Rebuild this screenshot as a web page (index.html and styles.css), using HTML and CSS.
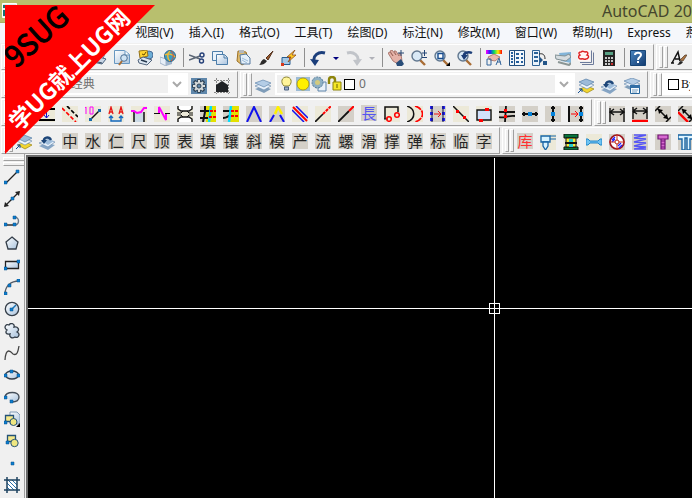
FILE: index.html
```html
<!DOCTYPE html>
<html lang="zh-CN">
<head>
<meta charset="utf-8">
<title>AutoCAD</title>
<link rel="stylesheet" href="styles.css">
</head>
<body>
<svg class="defs" aria-hidden="true">
  <defs>
    <linearGradient id="ice" x1="0" y1="0" x2="1" y2="1"><stop offset="0" stop-color="#fff"/><stop offset="1" stop-color="#a9c3de"/></linearGradient>
    <linearGradient id="navy" x1="0" y1="0" x2="1" y2="1"><stop offset="0" stop-color="#4a86c0"/><stop offset="1" stop-color="#123a70"/></linearGradient>
    <linearGradient id="rainbow"><stop offset="0" stop-color="#f0f"/><stop offset=".25" stop-color="#22f"/><stop offset=".5" stop-color="#0d6"/><stop offset=".75" stop-color="#fe0"/><stop offset="1" stop-color="#f00"/></linearGradient>
    <symbol id="layers" viewBox="0 0 16 16"><path d="M0 11l8-3 8 3-7 4z" fill="#7f9db9"/><path d="M0 8l8-3 8 3-7 4z" fill="#e8f1fa" stroke="#7292b3" stroke-width=".7"/><path d="M0 5l8-3 8 3-7 4z" fill="#b4cde6" stroke="#6488ae" stroke-width=".7"/></symbol>
    <symbol id="layers-current" viewBox="0 0 16 16"><path d="M2 11l7-3 7 3-7 4z" fill="#f2d530" stroke="#9a8413" stroke-width=".7"/><path d="M1 7l7-3 8 3-7 4z" fill="#eef5fc" stroke="#7292b3" stroke-width=".7"/><path d="M1 4l7-3 8 3-7 4z" fill="#9dbbd9" stroke="#587fa8" stroke-width=".7"/><path d="M0 15l4-4M1 11h3v3" fill="none" stroke="#124f94"/></symbol>
    <symbol id="layers-back" viewBox="0 0 16 16"><path d="M0 12l8-3 8 2-7 5z" fill="#86a5c5"/><path d="M0 9l8-3 8 2-7 5z" fill="#e6f0fa" stroke="#6d8eb1" stroke-width=".7"/><path d="M3 7l6-2 6 2-6 4z" fill="#9fbddb"/><path d="M5 8c-1-5 5-6 7-2" fill="none" stroke="#1d4679" stroke-width="2.4"/><path d="M2 6h6l-3 4z" fill="#1d4679"/></symbol>
    <symbol id="lens" viewBox="0 0 16 16"><path d="M9 10l5 5" stroke="#a96d35" stroke-width="2.4"/><circle cx="6" cy="6" r="5" fill="#d9e9f6" stroke="#62788f" stroke-width="1.4"/></symbol>
    <symbol id="printer" viewBox="0 0 16 16"><path d="M4 7l2-6 8 2-2 6z" fill="#fff" stroke="#6b8bb0"/><path d="M1 9l4-3 10 3-4 5-9-2z" fill="#c7d5e5" stroke="#48627f"/><path d="M3 11l8 2" stroke="#33475f"/></symbol>
  </defs>
</svg>

<header class="titlebar">
  <svg class="app-icon" viewBox="0 0 16 16"><path d="M.5 .5h14v14H.5z" fill="#dff0ec" stroke="#fff"/><path d="M1 2h4v3H1zm6 0h5v2H7zM1 7h3v6H1z" fill="#176f70"/></svg>
  <span class="title">AutoCAD 20</span>
</header>

<nav class="menubar">
  <a href="#">文件(F)</a><a href="#">编辑(E)</a><a href="#">视图(V)</a><a href="#">插入(I)</a><a href="#">格式(O)</a><a href="#">工具(T)</a><a href="#">绘图(D)</a><a href="#">标注(N)</a><a href="#">修改(M)</a><a href="#">窗口(W)</a><a href="#">帮助(H)</a><a href="#">Express</a><a href="#">燕</a>
</nav>

<div class="row">
  <div class="toolbar">
    <span class="grip"></span>
    <button aria-label="新建"><svg viewBox="0 0 16 16"><path d="M3 1h7l3 3v11H3z" fill="#fff" stroke="#567"/></svg></button>
    <button aria-label="打开"><svg viewBox="0 0 16 16"><path d="M1 4h6l1 2h7v8H1z" fill="#f2cf66" stroke="#976f1d"/></svg></button>
    <button aria-label="保存"><svg viewBox="0 0 16 16"><path d="M1 1h14v14H1z" fill="#4973a8"/><path d="M4 2h8v5H4z" fill="#fff"/></svg></button>
    <span class="sep"></span>
    <button aria-label="打印"><svg><use href="#printer"/></svg></button>
    <button aria-label="打印预览"><svg viewBox="0 0 16 16"><path d="M.5 .5h10l5 4v9H.5z" fill="url(#ice)" stroke="#6797c1"/><path d="M11 1v4h4" fill="#fff" stroke="#6797c1"/><path d="M8 11l-3 4" stroke="#a96d35" stroke-width="2"/><circle cx="10" cy="8" r="3.3" fill="#cfe3f3" stroke="#4e7195"/></svg></button>
    <button aria-label="发布"><svg viewBox="0 0 16 16"><circle cx="12" cy="5" r="4" fill="#6cadd5" stroke="#496c97"/><path d="M2 1l8-1 1 6-8 2z" fill="#ffd42f" stroke="#93711b"/><path d="M5 4l2 1 2-3" fill="none" stroke="#6b4b00"/><path d="M1 10l5-3 9 3-5 5-8-2z" fill="#dce6f1" stroke="#52647c"/><path d="M4 10l6 2" stroke="#26384e" stroke-width="1.5"/></svg></button>
    <button aria-label="三维 DWF"><svg viewBox="0 0 16 16"><path d="M0 7l6 2v7l-6-3z" fill="#e6eef7" stroke="#a5b5c9"/><path d="M6 9l6-1v6l-6 2z" fill="#9eb4cc"/><circle cx="10" cy="6" r="5.5" fill="#3e9ebd" stroke="#336487"/><path d="M10 1c-3 2-3 8 0 10M5 5c3-2 8-1 10 2" fill="none" stroke="#f2b832" stroke-width="1.5"/><path d="M11 1c3 3 3 7 0 10" fill="none" stroke="#cf493a"/></svg></button>
    <span class="sep line"></span>
    <button aria-label="剪切"><svg viewBox="0 0 16 16"><path d="M0 5l11 4M0 10l11-4" stroke="#5b6675" stroke-width="1.6"/><circle cx="13" cy="5" r="2" fill="none" stroke="#243f77" stroke-width="1.4"/><circle cx="12.500" cy="11" r="2" fill="none" stroke="#243f77" stroke-width="1.4"/></svg></button>
    <button aria-label="复制"><svg viewBox="0 0 16 16"><path d="M.5 1.500h10v9H.5z" fill="#e8f2fb" stroke="#4d7eaa"/><path d="M4.500 4.500h8l3 3v7h-11z" fill="url(#ice)" stroke="#4d7eaa"/><path d="M12 5v3h3" fill="none" stroke="#4d7eaa"/></svg></button>
    <button aria-label="粘贴"><svg viewBox="0 0 16 16"><path d="M3 1l8 1 3 9-7 4-5-4z" fill="#dfba6b" stroke="#9b7127"/><path d="M4 0h5v3H4z" fill="#b3b8bd"/><path d="M5 5l6-1 4 4v6H6z" fill="#e5f0fa" stroke="#55799f"/><path d="M7 8l6 3M7 10l5 3" stroke="#9cbcd9"/></svg></button>
    <button aria-label="特性匹配"><svg viewBox="0 0 16 16"><path d="M8 8l7-7-5 9z" fill="#9b5a2d" stroke="#54311c"/><path d="M1 15c2-1 1-4 5-6l3 2c-2 3-5 4-8 4z" fill="#2c2b2a"/></svg></button>
    <button aria-label="块编辑器"><svg viewBox="0 0 16 16"><path d="M1 7.500h8v7H1z" fill="#a4c8e5" stroke="#275d91"/><path d="M0 13h3v3H0zM8 6h2v3H8z" fill="#d93a1b"/><path d="M14 0L6 7h4l-3 5 8-7h-4z" fill="#ffcb24" stroke="#8f4a16" stroke-width=".8"/></svg></button>
    <span class="sep line"></span>
    <button aria-label="放弃"><svg viewBox="0 0 16 16"><path d="M4 11c-1-5 4-10 11-8" fill="none" stroke="#1b3e7b" stroke-width="3"/><path d="M0 9l9 1-4 6z" fill="#1b3e7b"/></svg></button>
    <button class="drop" aria-label="放弃列表"><svg viewBox="0 0 6 16"><path d="M0 7h6L3 10z" fill="#00007e"/></svg></button>
    <button aria-label="重做"><svg viewBox="0 0 16 16"><path d="M12 11c1-5-4-10-11-8" fill="none" stroke="#c1c4c9" stroke-width="3"/><path d="M16 9l-9 1 4 6z" fill="#c1c4c9"/></svg></button>
    <button class="drop" aria-label="重做列表"><svg viewBox="0 0 6 16"><path d="M0 7h6L3 10z" fill="#b0b1b8"/></svg></button>
    <span class="sep line"></span>
    <button aria-label="实时平移"><svg viewBox="0 0 16 16"><path d="M0 3l2-1 3 4-3-5 2-1 4 5-2-4 2 0 3 5 0-3 2 1 1 7-4 3-5-3z" fill="#e5b2a8" stroke="#94594f" stroke-width=".7"/><path d="M8 13l5-4 3 5-2 2H9z" fill="#294d78"/><path d="M13 0v6M10 3h6" stroke="#264772"/></svg></button>
    <button aria-label="实时缩放"><svg viewBox="0 0 16 16"><use href="#lens"/><path d="M11 3h5M13.500 0v6M11 7.500h5" stroke="#244677"/></svg></button>
    <button aria-label="窗口缩放"><svg viewBox="0 0 16 16"><use href="#lens"/><path d="M4 3.500h5v5H4z" fill="#fff" stroke="#174b8d" stroke-width="1.400"/><path d="M16 12v4h-4z"/></svg></button>
    <button aria-label="缩放上一个"><svg viewBox="0 0 16 16"><use href="#lens"/><path d="M7 7c-1-4 4-6 8-4" fill="none" stroke="#1c3e78" stroke-width="2.500"/><path d="M4 5h7l-4 5z" fill="#1c3e78"/></svg></button>
    <span class="sep line"></span>
    <button aria-label="特性"><svg viewBox="0 0 16 16"><path d="M0 0h16v4H0z" fill="url(#rainbow)"/><path d="M2 7l6-3 6 3-5 4-5-1z" fill="#edb9ad" stroke="#985d50" stroke-width=".7"/><path d="M1 9h4v6H1zM10 15l3-7 2 7M11 12h4" fill="none" stroke="#33659b"/></svg></button>
    <button aria-label="设计中心"><svg viewBox="0 0 16 16"><path d="M.5 .5h15v15H.5z" fill="#f3f8fc" stroke="#225080"/><path d="M5.500 1v14" stroke="#225080"/><path d="M2 3h2M2 6h2M2 9h2M2 12h2M7 4h3M12 4h2M7 8h3M12 8h2M7 12h3M12 12h2" stroke="#255f9c" stroke-width="2"/></svg></button>
    <button aria-label="工具选项板"><svg viewBox="0 0 16 16"><path d="M.5 .5h7v15h-7z" fill="#e9f2fa" stroke="#2e6295"/><path d="M2 3h4M2 7h4M2 11h4" stroke="#2a6298" stroke-width="2"/><path d="M7 4c4-1 6 1 6 5" fill="none" stroke="#222"/><path d="M8 7l3 3-3 3zM11 11h4v4h-4z" fill="#245587"/></svg></button>
    <button aria-label="图纸集管理器"><svg viewBox="0 0 16 16"><path d="M4 3l12-1v11l-10-2z" fill="#83b5d9"/><path d="M0 5l10 1 4-2 2 3-5 4-10-2z" fill="#d6dcdf" stroke="#819094"/><path d="M3 12l11 3 2-2" fill="none" stroke="#8b9695" stroke-width="2"/></svg></button>
    <button aria-label="标记集管理器"><svg viewBox="0 0 16 16"><path d="M4 14.500h11.500v-12M2 12.500h11.500v-12" fill="none" stroke="#6d7b9b"/><path d="M0 0h12v11H0z" fill="#fff6f4"/><path d="M3 2c2-2 3 0 4 0 2-1 4 1 2 3 3 1 1 4-1 4-2 1-3-1-5 0-3 0-3-3-1-4-2-2-1-3 1-3z" fill="none" stroke="#df2324" stroke-width="1.400"/></svg></button>
    <button aria-label="快速计算器"><svg viewBox="0 0 16 16"><path d="M2 0h12v16H2z" fill="#242424"/><path d="M4 2h8v3H4z" fill="#57a184"/><path d="M4 8h2M7 8h2M10 8h2M4 11h2M7 11h2M10 11h2M4 14h2M7 14h2" stroke="#fff" stroke-width="1.600"/><path d="M10 14h2" stroke="#f33" stroke-width="1.600"/></svg></button>
    <span class="sep line"></span>
    <button aria-label="帮助"><svg viewBox="0 0 16 16"><path d="M.5 .5h15v15H.5z" fill="url(#navy)" stroke="#174475"/><path d="M5 5c0-3 6-3 6 0 0 2-3 2-3 5M8 11v2" fill="none" stroke="#fff" stroke-width="2"/></svg></button>
  </div>
  <div class="toolbar last">
    <span class="grip"></span>
    <button aria-label="文字样式"><svg viewBox="0 0 16 16"><path d="M1 13L7 2l2 9M4 9h5M0 13h3" fill="none" stroke="#111" stroke-width="1.500"/><path d="M9 10l5-5 2 0-4 6z" fill="#ab7340" stroke="#4d3926" stroke-width=".7"/><path d="M6 15c2-1 2-4 4-4l2 1c-1 2-3 3-6 3z" fill="#242424"/></svg></button>
    <span class="sep line"></span>
  </div>
</div>

<div class="row">
  <div class="toolbar">
    <span class="grip"></span>
    <label class="combo workspace"><select aria-label="工作空间"><option>AutoCAD 经典</option></select><svg class="chevron" viewBox="0 0 10 10"><path d="M1 3l4 4 4-4"/></svg></label>
    <button aria-label="工作空间设置"><svg viewBox="0 0 16 16"><path d="M0 0h16v16H0z" fill="#5f87ab"/><path d="M8 1v14M1 8h14M3 3l10 10M13 3L3 13" stroke="#2f4355" stroke-width="3.600"/><path d="M8 2v12M2 8h12M4 4l8 8M12 4l-8 8" stroke="#d8dcdc" stroke-width="2"/><circle cx="8" cy="8" r="4" fill="#d5d9da"/><circle cx="8" cy="8" r="2" fill="#5f87ab" stroke="#2f4355"/></svg></button>
    <button aria-label="我的工作空间"><svg viewBox="0 0 16 16"><path d="M0 2.500h16M0 14.500h16M2.500 0v16M14.500 0v16" stroke="#888" stroke-dasharray="2 1"/><path d="M2 7l6-4 6 4v7H2z" fill="#202326"/></svg></button>
  </div>
  <div class="toolbar">
    <span class="grip"></span>
    <button aria-label="图层特性管理器"><svg><use href="#layers"/></svg></button>
    <label class="combo layer">
      <svg viewBox="0 0 16 16"><path d="M5 10C1 6 3 1 7.500 1S14 6 10 10z" fill="#fff59a" stroke="#8d8536"/><path d="M5.500 11h4v3h-4z" fill="#9fb1c9" stroke="#496181"/></svg>
      <svg viewBox="0 0 16 16"><path d="M1 1h14v14H1z" fill="#9cbbd5"/><circle cx="8" cy="8" r="6" fill="#fff000" stroke="#b09b19"/></svg>
      <svg viewBox="0 0 16 16"><path d="M7 6h8v9H7z" fill="#e9f1f9" stroke="#5c83a9"/><circle cx="6.500" cy="6.500" r="5.500" fill="#8eb0c4" stroke="#527998" stroke-dasharray="2 1"/><circle cx="6.500" cy="6.500" r="2.500" fill="#d3ca7e"/></svg>
      <svg viewBox="0 0 16 16"><path d="M2 8V4c0-4 6-4 6 0v4" fill="none" stroke="#8e850c" stroke-width="2.400"/><path d="M6 6h8v8H6z" fill="#f5e626" stroke="#8e850c"/><path d="M10 8v4" stroke="#695f00"/></svg>
      <span class="swatch"></span>
      <select aria-label="图层"><option>0</option></select><svg class="chevron" viewBox="0 0 10 10"><path d="M1 3l4 4 4-4"/></svg>
    </label>
    <button aria-label="置为当前图层"><svg><use href="#layers-current"/></svg></button>
    <button aria-label="上一个图层"><svg><use href="#layers-back"/></svg></button>
    <button aria-label="图层状态管理器"><svg viewBox="0 0 16 16"><use href="#layers" y="-2"/><path d="M6.500 7.500h9v8h-9z" fill="#f6fbff" stroke="#28669c"/><path d="M6 7h10v3H6z" fill="#326fa7"/><path d="M8 12h6M8 14h5" stroke="#779dbe"/></svg></button>
  </div>
  <div class="toolbar last">
    <span class="grip"></span>
    <label class="combo color"><span class="swatch"></span><select aria-label="颜色"><option>ByLayer</option></select></label>
  </div>
</div>

<div class="row">
  <div class="toolbar">
    <span class="grip"></span>
    <button aria-label="双线"><svg class="sand" viewBox="0 0 16 16"><path d="M0 3h16M0 13h16" stroke="#000" stroke-width="2"/></svg></button>
    <button aria-label="间距"><svg class="sand" viewBox="0 0 16 16"><path d="M0 3h16M0 14h16" stroke="#000" stroke-width="2"/><path d="M7.500 4v8M5 9l2.500 3L10 9" fill="none" stroke="#11c"/></svg></button>
    <button aria-label="平行虚线"><svg class="sand" viewBox="0 0 16 16"><path d="M0 2l14 14" stroke="#f00" stroke-width="1.700" stroke-dasharray="4 2"/><path d="M5 0l11 11" stroke="#000" stroke-width="1.700" stroke-dasharray="4 2"/></svg></button>
    <button aria-label="定长"><svg class="sand" viewBox="0 0 16 16"><path d="M1 1v7M0 2l1-1M5 1h3v7H5z" fill="none" stroke="#f0f"/><path d="M5 14L14 5" stroke="#111" stroke-width="1.500"/><path d="M4 12h3v3H4zM13 3h3v3h-3z" fill="#1268a8"/></svg></button>
    <button aria-label="文字对齐"><svg class="sand" viewBox="0 0 16 16"><path d="M1 8l2-7 2 7M1.500 6h3M11 8l2-7 2 7M11.500 6h3" fill="none" stroke="#e61919" stroke-width="1.300"/><path d="M3 10v5h10v-5M1 12l2-2 2 2M11 12l2-2 2 2" fill="none" stroke="#1268c0" stroke-width="1.400"/></svg></button>
    <button aria-label="曲线修剪"><svg class="sand" viewBox="0 0 16 16"><path d="M3 6h10v10H3z" fill="#cbdae6"/><path d="M3 16V6M13 16V6" stroke="#111" stroke-width="1.500"/><path d="M0 5h3l3 2 4-1 3-4h3" fill="none" stroke="#f0f" stroke-width="2"/></svg></button>
    <button aria-label="折线"><svg class="sand" viewBox="0 0 16 16"><path d="M0 7.500h6M11 7.500h5" stroke="#111"/><path d="M5 7V1l7 13V8" fill="none" stroke="#f0f" stroke-width="2"/></svg></button>
    <button aria-label="打断"><svg class="sand" viewBox="0 0 16 16"><path d="M1 0v3l3 2h8l3-2V0M1 16v-3l3-2h8l3 2v3" fill="#fff" stroke="#111" stroke-width="1.400"/><path d="M0 7h4l2-2M16 7h-4l-2-2M0 9h4l2 2M16 9h-4l-2 2" fill="none" stroke="#111"/></svg></button>
    <button aria-label="交线一"><svg class="stone" viewBox="0 0 16 16"><path d="M6 0h10v16H6z" fill="#e4e000"/><path d="M0 5h10M0 12h8M5 0v6L3 16" fill="none" stroke="#111" stroke-width="2"/><path d="M11 0L9 16" stroke="#0df" stroke-width="2.500"/><path d="M10 5h6M9 11h7" stroke="#f00" stroke-width="2" stroke-dasharray="3 1"/></svg></button>
    <button aria-label="交线二"><svg class="stone" viewBox="0 0 16 16"><path d="M7 0h9v16H7z" fill="#e4e000"/><path d="M0 5h7M0 12c4 0 5-2 8-3" fill="none" stroke="#111" stroke-width="2"/><path d="M8 0L6 16" stroke="#0df" stroke-width="2.500"/><path d="M8 5h8M8 10h7" stroke="#f00" stroke-width="2" stroke-dasharray="3 1"/></svg></button>
    <button aria-label="尖角"><svg class="stone" viewBox="0 0 16 16"><path d="M1 16L8 1l7 15" fill="none" stroke="#11e" stroke-width="2"/></svg></button>
    <button aria-label="延伸尖角"><svg class="stone" viewBox="0 0 16 16"><path d="M1 16l4-7M15 16l-4-7" stroke="#11e" stroke-width="2"/><path d="M6 8l3-7 4 7" fill="none" stroke="#fff000" stroke-width="2.500"/></svg></button>
    <button aria-label="三平行线"><svg class="sand" viewBox="0 0 16 16"><path d="M0 4l12 12M4 0l12 12" stroke="#11e" stroke-width="1.500"/><path d="M1 1l14 14" stroke="#f00" stroke-width="2"/></svg></button>
    <button aria-label="延长线"><svg class="sand" viewBox="0 0 16 16"><path d="M0 16l8-8" stroke="#111" stroke-width="1.600"/><path d="M8 8l8-8" stroke="#f00" stroke-width="2" stroke-dasharray="3 1"/></svg></button>
    <button aria-label="连接线"><svg class="stone" viewBox="0 0 16 16"><path d="M0 16L11 5" stroke="#111" stroke-width="1.800"/><path d="M11 5l5-5" stroke="#f00" stroke-width="2"/></svg></button>
    <button class="char blue">長</button>
    <button aria-label="矩形圆"><svg class="sand" viewBox="0 0 16 16"><path d="M1 13V1h13v5" fill="none" stroke="#111" stroke-width="1.500"/><path d="M0 13h4" stroke="#111"/><circle cx="5" cy="13" r="2.300" fill="none" stroke="#f00" stroke-width="1.500"/><circle cx="13" cy="9" r="2.300" fill="none" stroke="#f00" stroke-width="1.500"/></svg></button>
    <button aria-label="偏移弧"><svg class="sand" viewBox="0 0 16 16"><path d="M0 0c9 3 9 13 0 16" fill="none" stroke="#111" stroke-width="1.500"/><path d="M8 0c10 3 10 13 0 16" fill="none" stroke="#f00" stroke-width="1.700" stroke-dasharray="7 1"/></svg></button>
    <button aria-label="等距移动"><svg class="stone" viewBox="0 0 16 16"><path d="M1.500 0v16M13.500 0v16" stroke="#22f" stroke-width="3" stroke-dasharray="3 3"/><path d="M2 0v16M13 0v16" stroke="#114"/><path d="M4 8h7M8 5l3 3-3 3" fill="none" stroke="#e11"/></svg></button>
    <button aria-label="两点"><svg class="sand" viewBox="0 0 16 16"><path d="M0 0l16 16" stroke="#111" stroke-width="1.500"/><path d="M3 4h3v3H3zM10 10h3v3h-3z" fill="#f00"/></svg></button>
    <button aria-label="对角矩形"><svg class="sand" viewBox="0 0 16 16"><path d="M1 4h14v10H1z" fill="#d2e1fc" stroke="#111" stroke-width="1.400"/><path d="M9 2h4v3H9zM3 13h4v3H3z" fill="#f00"/></svg></button>
    <button aria-label="交点打断"><svg class="stone" viewBox="0 0 16 16"><path d="M0 6h16M0 11c5 2 8-2 16-1M7 0L6 16" fill="none" stroke="#111" stroke-width="1.800"/><path d="M5 3h3v3H5zM5 9h3v3H5z" fill="#f00"/></svg></button>
    <button aria-label="水平中点"><svg class="stone" viewBox="0 0 16 16"><path d="M0 8h16M2 6v4M14 6v4" stroke="#111" stroke-width="2"/><path d="M6 6h4v4H6z" fill="#0784db"/></svg></button>
    <button aria-label="竖直中点"><svg class="stone" viewBox="0 0 16 16"><path d="M8 0v16M6 2h4M6 14h4" stroke="#111" stroke-width="2"/><path d="M6 6h4v4H6z" fill="#0784db"/></svg></button>
    <button aria-label="对齐中点"><svg class="stone" viewBox="0 0 16 16"><path d="M1 0v16M13 0v16M11 2h4M11 14h4" stroke="#111" stroke-width="2"/><path d="M3 8h6M7 5l3 3-3 3" fill="none" stroke="#f00"/><path d="M11 6h4v4h-4z" fill="#0784db"/></svg></button>
  </div>
  <div class="toolbar last">
    <span class="grip"></span>
    <button aria-label="线性标注"><svg class="stone" viewBox="0 0 16 16"><path d="M1 2v14M15 2v14" stroke="#111" stroke-width="1.400"/><path d="M1 6h14M5 3L1 6l4 3M11 3l4 3-4 3" fill="none" stroke="#111" stroke-width="1.400"/></svg></button>
    <button aria-label="基准标注"><svg class="stone" viewBox="0 0 16 16"><path d="M1 1v12M15 1v12M1 5h14M5 2L1 5l4 3M11 2l4 3-4 3" fill="none" stroke="#111" stroke-width="1.400"/><path d="M0 15h16" stroke="#f00" stroke-width="2.400"/></svg></button>
    <button aria-label="对齐标注"><svg class="stone" viewBox="0 0 16 16"><path d="M0 5l5-5M11 16l5-5M3 3l10 10" stroke="#111" stroke-width="1.500"/><path d="M3 3l5 1-4 4zM13 13l-1-5-4 4z"/></svg></button>
    <button aria-label="倾斜标注"><svg class="stone" viewBox="0 0 16 16"><path d="M0 5l5-5M11 16l5-5M4 3l10 10" stroke="#111" stroke-width="1.500"/><path d="M4 3l5 1-4 4zM14 13l-1-5-4 4z"/><path d="M0 6l10 10" stroke="#f00" stroke-width="2.400"/></svg></button>
  </div>
</div>

<div class="row">
  <div class="toolbar">
    <span class="grip"></span>
    <button aria-label="当前图层"><svg><use href="#layers-current"/></svg></button>
    <button aria-label="恢复图层"><svg><use href="#layers-back"/></svg></button>
    <button class="char">中</button><button class="char">水</button><button class="char">仁</button><button class="char">尺</button><button class="char">顶</button><button class="char">表</button><button class="char">填</button><button class="char">镶</button><button class="char">斜</button><button class="char">模</button><button class="char">产</button><button class="char">流</button><button class="char">螺</button><button class="char">滑</button><button class="char">撑</button><button class="char">弹</button><button class="char">标</button><button class="char">临</button><button class="char">字</button>
  </div>
  <div class="toolbar last">
    <span class="grip"></span>
    <button class="char red">库</button>
    <button aria-label="浇口"><svg class="sand" viewBox="0 0 16 16"><path d="M1 2h9v6H1z" fill="#d7f3ff" stroke="#1765a5" stroke-width="1.300"/><path d="M3 8h5v4l-2.500 4L3 12z" fill="#d7f3ff" stroke="#1765a5" stroke-width="1.300"/><path d="M10 2h6M10 5h6" stroke="#1765a5"/></svg></button>
    <button aria-label="模架"><svg class="sand" viewBox="0 0 16 16"><path d="M1 0h14v4H1zM1 13h14v3H1z" fill="#08733d" stroke="#111"/><path d="M3 4h10v9H3z" fill="#f5e93b" stroke="#111"/><path d="M6 5h4v8H6z" fill="#24ccd0"/><path d="M2 9h12" stroke="#111" stroke-width="2"/></svg></button>
    <button aria-label="拉杆"><svg class="sand" viewBox="0 0 16 16"><path d="M0 5h2l2 2h8l2-2h2v6h-2l-2-2H4l-2 2H0z" fill="#6fc3f2" stroke="#2387cb"/></svg></button>
    <button aria-label="定位圈"><svg class="stone" viewBox="0 0 16 16"><circle cx="8" cy="8" r="7" fill="#fff" stroke="#9c151f" stroke-width="1.700"/><path d="M3 6l3-3M3 8l3-3M9 12l3-3M10 14l3-3" stroke="#22f" stroke-width="1.300"/><path d="M8 0v16M0 8h16" stroke="#c32"/><circle cx="8" cy="8" r="2" fill="#fff" stroke="#b21"/></svg></button>
    <button aria-label="弹簧"><svg class="stone" viewBox="0 0 16 16"><path d="M2 1h12L2 4l12 1L2 8l12 1-12 3 12 1-12 2h12" fill="none" stroke="#5555f5" stroke-width="1.300"/></svg></button>
    <button aria-label="螺钉"><svg class="stone" viewBox="0 0 16 16"><path d="M3 1h10v4H3zM6 5h4v10H6z" fill="#d86ad1" stroke="#701477" stroke-width="1.200"/><path d="M6 7h4M6 10h4M6 13h4" stroke="#701477"/></svg></button>
    <button aria-label="浇口套"><svg class="stone" viewBox="0 0 16 16"><path d="M0 1h16v4h-4v11H9V4H7v12H4V5H0z" fill="#e1f5ff" stroke="#1765a5" stroke-width="1.400"/></svg></button>
  </div>
</div>

<main class="workspace-area">
  <aside class="draw-tools">
    <span class="grip"></span>
    <button aria-label="直线"><svg viewBox="0 0 16 16"><path d="M2 14L14 2" stroke="#222" stroke-width="1.300"/><path class="dot" d="M0 12h3v3H0zM12 1h3v3h-3z"/></svg></button>
    <button aria-label="构造线"><svg viewBox="0 0 16 16"><path d="M1 15L15 1" stroke="#222" stroke-width="1.300"/><path d="M0 16l1-5 4 4zM16 0l-5 1 4 4z" fill="#222"/><path class="dot" d="M7 6h3v3H7z"/></svg></button>
    <button aria-label="多段线"><svg viewBox="0 0 16 16"><path d="M1 12h9" stroke="#222" stroke-width="1.400"/><path d="M10 4c6 0 6 8 0 8" fill="none" stroke="#687686" stroke-width="1.400"/><path class="dot" d="M0 10h3v3H0zM9 10h3v3H9zM9 3h3v3H9z"/></svg></button>
    <button aria-label="正多边形"><svg viewBox="0 0 16 16"><path d="M8 2l6 5-2 7H4L2 7z" fill="url(#ice)" stroke="#343e49" stroke-width="1.300"/></svg></button>
    <button aria-label="矩形"><svg viewBox="0 0 16 16"><path d="M1.500 4.500h13v7h-13z" fill="url(#ice)" stroke="#222" stroke-width="1.300"/><path class="dot" d="M0 10h3v3H0zM13 3h3v3h-3z"/></svg></button>
    <button aria-label="圆弧"><svg viewBox="0 0 16 16"><path d="M1 15c0-8 6-13 14-13" fill="none" stroke="#555d68" stroke-width="1.300"/><path class="dot" d="M0 13h3v3H0zM4 5h3v3H4zM13 0h3v3h-3z"/></svg></button>
    <button aria-label="圆"><svg viewBox="0 0 16 16"><circle cx="8" cy="8" r="6.700" fill="url(#ice)" stroke="#343e49" stroke-width="1.300"/><path d="M8 8l4-4" stroke="#1672b4" stroke-width="1.500"/><path class="dot" d="M6 7h3v3H6z"/></svg></button>
    <button aria-label="修订云线"><svg viewBox="0 0 16 16"><path d="M3 7C-1 5 2 0 5 2c2-3 6-1 5 2 4-1 6 3 3 5 4 2 1 7-2 5-3 2-6 0-5-3-4 1-5-2-3-4z" fill="url(#ice)" stroke="#343e49" stroke-width="1.300"/></svg></button>
    <button aria-label="样条曲线"><svg viewBox="0 0 16 16"><path d="M1 15C2 0 8 8 9 9c4 2 5-2 6-8" fill="none" stroke="#444" stroke-width="1.300"/></svg></button>
    <button aria-label="椭圆"><svg viewBox="0 0 16 16"><ellipse cx="8" cy="8" rx="6.500" ry="4" fill="url(#ice)" stroke="#343e49" stroke-width="1.400"/><path class="dot" d="M0 7h3v3H0zM6 3h3v3H6zM13 7h3v3h-3z"/></svg></button>
    <button aria-label="椭圆弧"><svg viewBox="0 0 16 16"><path d="M1 8c1-6 14-6 14 0 0 4-4 5-7 5z" fill="url(#ice)"/><path d="M1 8c1-6 14-6 14 0 0 4-4 5-7 5" fill="none" stroke="#444e59" stroke-width="1.400"/><path class="dot" d="M0 7h3v3H0zM6 11h3v3H6z"/></svg></button>
    <button aria-label="插入块"><svg viewBox="0 0 16 16"><path d="M6 1h7l3 3v9H6z" fill="url(#ice)" stroke="#819bb5"/><path d="M1.500 4.500h8v6h-8z" fill="#f5e98a" stroke="#245277" stroke-width="1.300"/><circle cx="9.500" cy="11" r="3.500" fill="#efe780" stroke="#245277"/><path class="dot" d="M0 10h3v3H0z"/><path d="M16 12v4h-4z"/></svg></button>
    <button aria-label="创建块"><svg viewBox="0 0 16 16"><path d="M3.500 2.500h8v6h-8z" fill="#f5e98a" stroke="#245277" stroke-width="1.300"/><circle cx="10.500" cy="10" r="3.700" fill="#efe780" stroke="#245277"/><path class="dot" d="M2 8h3v3H2z"/></svg></button>
    <button aria-label="点"><svg viewBox="0 0 16 16"><path class="dot" d="M7 7h3v3H7z"/></svg></button>
    <button aria-label="图案填充"><svg viewBox="0 0 16 16"><path d="M3 3h10v10H3z" fill="#fff"/><path d="M3 10l3 3M3 6l7 7M4 3l9 9M8 3l5 5" stroke="#2970ad"/><path d="M0 3h16M0 13h16M3 0v16M13 0v16" stroke="#1c415f" stroke-width="1.500"/></svg></button>
  </aside>
  <section class="drawing">
    <span class="hair-x"></span><span class="hair-y"></span><span class="pickbox"></span>
  </section>
</main>

<svg class="banner" viewBox="0 0 150 149">
  <path d="M0 0h150L0 149z" fill="#f00"/>
  <text class="banner-name" transform="translate(11 64) rotate(-42)">9SUG</text>
  <text class="banner-line" transform="translate(14 127) rotate(-45)">学UG就上UG网</text>
</svg>
</body>
</html>
```
FILE: styles.css
```css
* { box-sizing: border-box; }

body {
  margin: 0;
  height: 100vh;
  display: flex;
  flex-direction: column;
  overflow: hidden;
  background: #f0f0f0;
  color: #111;
  font: 12px/18px "Noto Sans", "Noto Sans CJK SC", sans-serif;
}

svg { display: block; flex: none; width: 16px; height: 16px; }
.defs { position: absolute; width: 0; height: 0; }

.titlebar {
  flex: none;
  display: flex;
  justify-content: space-between;
  align-items: center;
  height: 23px;
  padding-left: 2px;
  background: #b8bf6e;
  border-bottom: 1px solid #a9b064;
}
.title { color: #45462d; font-size: 16px; line-height: 22px; white-space: nowrap; }

.menubar {
  flex: none;
  display: flex;
  gap: 15px;
  height: 20px;
  padding: 1px 0 0 30px;
  overflow: hidden;
  background: #f5f7fb;
  white-space: nowrap;
}
.menubar a { flex: none; color: #111; text-decoration: none; }

.row {
  flex: none;
  display: flex;
  gap: 2px;
  height: 28px;
  padding: 1px 0 0 1px;
  overflow: hidden;
}
.menubar + .row { height: 27px; }

.toolbar {
  flex: none;
  display: flex;
  padding-right: 3px;
  border: 1px solid #a0a0a0;
  border-top-color: #fff;
  border-left-color: #fff;
}
.toolbar.last { flex: 1 0 auto; padding-right: 0; border-right: 0; }

.grip { flex: none; display: flex; gap: 1px; width: 11px; padding: 1px 0 1px 2px; }
.grip::before, .grip::after {
  content: "";
  width: 3px;
  border: 1px solid #a0a0a0;
  border-top-color: #fff;
  border-left-color: #fff;
}

button {
  flex: none;
  width: 23px;
  margin: 0;
  padding: 4px 4px 2px 3px;
  border: 0;
  background: none;
  color: #252525;
  font: 15px/16px "Noto Sans CJK SC", sans-serif;
}
button.drop { width: 13px; }
.drop svg { width: 6px; }
.sand { background: #ece9d8; }
.stone { background: #d4d0c8; }
.char {
  padding: 0 4px 0 3px;
  background: linear-gradient(#d4d0c8, #d4d0c8) 3px 5px / 16px 16px no-repeat;
}
.char.blue { color: #5555f0; }
.char.red { color: #ff3030; }

.sep { flex: none; width: 6px; padding: 3px 2px 2px 3px; }
.sep.line::before { content: ""; display: block; height: 100%; background: #8f8f8f; }

.combo {
  flex: none;
  display: flex;
  align-items: center;
  height: 22px;
  margin-top: 1px;
  border: 2px solid #fff;
  background: #f0f0f0;
}
.combo select {
  flex: 1;
  min-width: 0;
  height: 18px;
  padding: 0;
  border: 0;
  appearance: none;
  background: none;
  color: #6d6d6d;
  opacity: 1;
  font: 12px/18px "Noto Sans", "Noto Sans CJK SC", sans-serif;
}
.chevron { width: 18px; height: 18px; padding: 4px; background: #fff; fill: none; stroke: #a9a9a9; stroke-width: 2; }
.workspace { width: 175px; }
.workspace select { padding-left: 2px; }
.layer { width: 300px; padding-left: 2px; }
.layer select { padding-left: 4px; }
.color { flex: 1; width: 30px; padding-left: 4px; background: #fff; }
.color select { padding-left: 2px; color: #111; font-family: "Liberation Serif", serif; }
.swatch { flex: none; width: 11px; height: 11px; margin-left: 1px; border: 1px solid #000; background: #fff; }
.color .swatch { margin: 0; }

.workspace-area { flex: 1; display: flex; min-height: 0; }
.draw-tools {
  flex: none;
  display: flex;
  flex-direction: column;
  width: 25px;
  padding: 1px 0 0 1px;
  overflow: hidden;
  border-right: 1px solid #a0a0a0;
}
.draw-tools .grip { flex-direction: column; width: 22px; height: 11px; padding: 2px 0 0 2px; }
.draw-tools .grip::before, .draw-tools .grip::after { width: 20px; height: 3px; }
.draw-tools button { height: 22px; padding: 3px; }
.dot { fill: #0b7dd0; stroke: #0a518b; stroke-width: .5; }

.drawing {
  position: relative;
  flex: 1;
  overflow: hidden;
  background: #000;
  border-top: 2px solid #696969;
  border-left: 2px solid #696969;
  margin: 1px 0 0 1px;
}
.hair-x, .hair-y, .pickbox { position: absolute; }
.hair-x { left: 0; right: 0; top: 151px; height: 1px; background: #fff; }
.hair-y { top: 1px; bottom: 0; left: 466px; width: 1px; background: #fff; }
.pickbox { left: 461px; top: 146px; width: 11px; height: 11px; border: 1px solid #fff; }

.banner { position: absolute; left: 5px; top: 5px; width: 150px; height: 149px; }
.banner-name { font: 29px "Noto Sans CJK SC", sans-serif; fill: #000; stroke: #000; stroke-width: 1px; }
.banner-line { font: bold 23px "Noto Sans CJK SC", sans-serif; fill: #fff; }
```
